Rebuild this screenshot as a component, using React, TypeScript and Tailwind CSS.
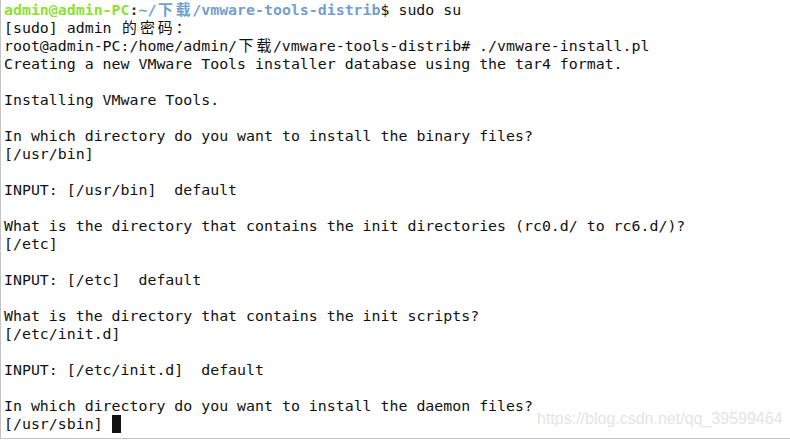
import type { ReactNode } from 'react';

const lines: string[] = [
    'Creating a new VMware Tools installer database using the tar4 format.',
    '',
    'Installing VMware Tools.',
    '',
    'In which directory do you want to install the binary files?',
    '[/usr/bin]',
    '',
    'INPUT: [/usr/bin]  default',
    '',
    'What is the directory that contains the init directories (rc0.d/ to rc6.d/)?',
    '[/etc]',
    '',
    'INPUT: [/etc]  default',
    '',
    'What is the directory that contains the init scripts?',
    '[/etc/init.d]',
    '',
    'INPUT: [/etc/init.d]  default',
    '',
    'In which directory do you want to install the daemon files?',
];

// CJK glyphs take two terminal cells
function Wide({ children }: { children: ReactNode }) {
    return <span className="inline-block w-[17.92px] text-center">{children}</span>;
}

function Line({ children }: { children?: ReactNode }) {
    return <div className="h-[18px] leading-[18px] whitespace-pre">{children}</div>;
}

export default function App() {
    return (
        <div className="relative w-[790px] h-[441px] bg-white overflow-hidden">
            <div
                className="h-[439px] border-l border-b border-[#c4c4c4] pt-px pl-[3px] text-[14.9px] text-[#111]"
                style={{ fontFamily: '"DejaVu Sans Mono", "Noto Sans CJK SC", monospace' }}
            >
                <Line>
                    <span className="font-bold text-[#8ae234]">admin@admin-PC</span>
                    <span className="font-bold text-[#333]">:</span>
                    <span className="font-bold text-[#729fcf]">
                        ~/<Wide>下</Wide><Wide>载</Wide>/vmware-tools-distrib
                    </span>
                    $ sudo su
                </Line>
                <Line>
                    [sudo] admin <Wide>的</Wide><Wide>密</Wide><Wide>码</Wide><Wide>：</Wide>
                </Line>
                <Line>
                    root@admin-PC:/home/admin/<Wide>下</Wide><Wide>载</Wide>/vmware-tools-distrib# ./vmware-install.pl
                </Line>
                {lines.map((l, i) => (
                    <Line key={i}>{l}</Line>
                ))}
                <Line>
                    [/usr/sbin] <span className="inline-block w-[9px] h-[18px] align-top bg-[#111]" />
                </Line>
            </div>
            <div
                className="absolute left-[537px] top-[411px] text-[16px] leading-none text-[#e4e4e4]"
                style={{ fontFamily: '"Liberation Sans", Arial, sans-serif' }}
            >
                https://blog.csdn.net/qq_39599464
            </div>
        </div>
    );
}
